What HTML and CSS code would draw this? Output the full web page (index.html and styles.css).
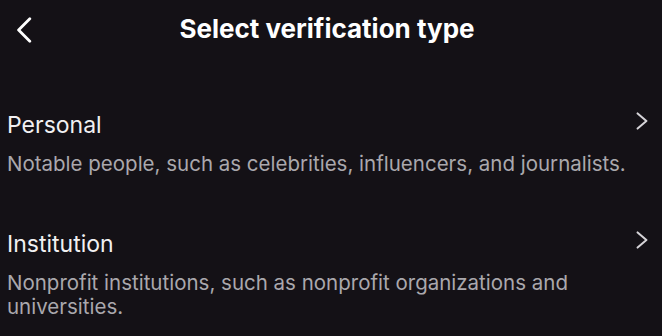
FILE: index.html
```html
<!DOCTYPE html>
<html>
<head>
<meta charset="utf-8">
<link rel="stylesheet" href="styles.css">
</head>
<body>
<div class="screen">
  <header class="nav">
    <button class="back" aria-label="Back">
      <svg width="16" height="26" viewBox="0 0 16 26"><path d="M13.8 1.8 L2.6 13 L13.8 24.2" fill="none" stroke="#ffffff" stroke-width="2.8" stroke-linecap="round" stroke-linejoin="round"/></svg>
    </button>
    <h1 class="title">Select verification type</h1>
    <span class="spacer"></span>
  </header>
  <ul class="options">
    <li class="option">
      <div class="option-head">
        <span class="option-title">Personal</span>
        <svg class="chev" width="12" height="18" viewBox="0 0 12 18"><path d="M1.6 1.4 L10.4 9 L1.6 16.6" fill="none" stroke="#d6d4d8" stroke-width="2" stroke-linecap="round" stroke-linejoin="round"/></svg>
      </div>
      <p class="option-desc">Notable people, such as celebrities, influencers, and journalists.</p>
    </li>
    <li class="option">
      <div class="option-head">
        <span class="option-title">Institution</span>
        <svg class="chev" width="12" height="18" viewBox="0 0 12 18"><path d="M1.6 1.4 L10.4 9 L1.6 16.6" fill="none" stroke="#d6d4d8" stroke-width="2" stroke-linecap="round" stroke-linejoin="round"/></svg>
      </div>
      <p class="option-desc">Nonprofit institutions, such as nonprofit organizations and universities.</p>
    </li>
  </ul>
</div>
</body>
</html>
```
FILE: styles.css
```css
* { box-sizing: border-box; }
html, body { margin: 0; padding: 0; background: #141116; }
body { font-family: Inter, "Noto Sans", sans-serif; color: #f1f0f2; }
.screen { width: 662px; height: 336px; overflow: hidden; }
.nav { display: grid; grid-template-columns: 1fr auto 1fr; align-items: start; padding: 14px 8px 0 0; height: 44px; }
.back { justify-self: start; margin: 3px 0 0 16px; background: none; border: 0; padding: 0; width: 16px; height: 26px; display: block; }
.back svg { display: block; }
.title { margin: 0; font-size: 26px; line-height: 30px; font-weight: 700; color: #ffffff; }
.spacer { display: block; }
.options { list-style: none; margin: 67px 0 0 0; padding: 0; }
.option { padding: 0 14px 0 7px; }
.option + .option { margin-top: 54px; }
.option-head { display: flex; align-items: flex-start; justify-content: space-between; }
.option-title { font-size: 23px; line-height: 28px; color: #f1f0f2; }
.chev { margin-top: 1px; display: block; }
.option-desc { margin: 13px 0 0 0; font-size: 20.5px; line-height: 24px; color: #aaa8ad; }
```
